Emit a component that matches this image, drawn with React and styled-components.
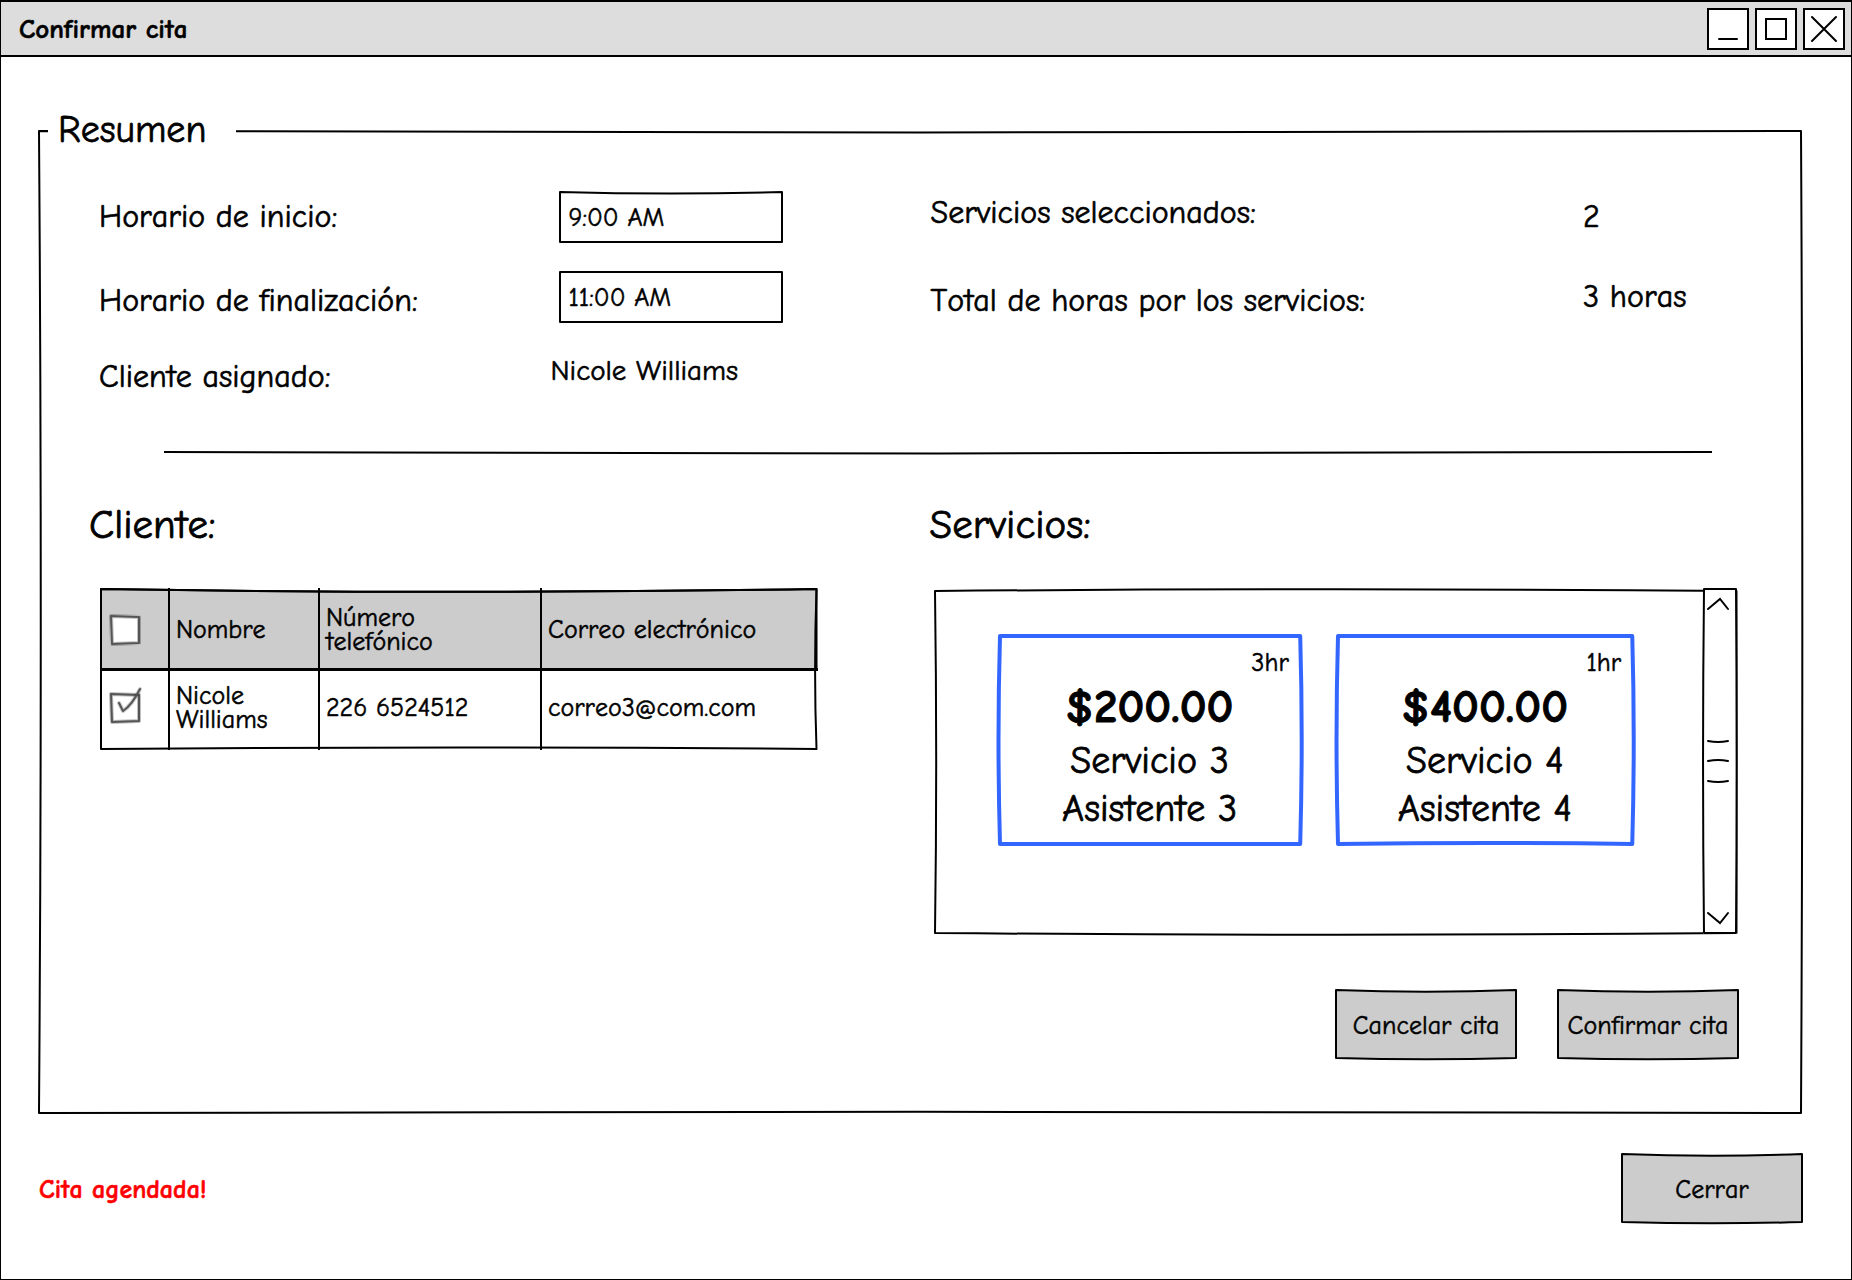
import React, { useState } from "react";
import styled, { createGlobalStyle } from "styled-components";

const INK = "#000";
const FILL = "#ccc";
const BLUE = "#3366ff";
const FONT = `"Comic Sans MS", "Comic Neue", "Open Sans", "Noto Sans", sans-serif`;

const GlobalStyle = createGlobalStyle`
  *, *::before, *::after {
    box-sizing: border-box;
    font-kerning: none;
    -webkit-text-stroke: 0.02em currentColor;
  }
  body {
    margin: 0;
    background: #fff;
    color: ${INK};
    font-family: ${FONT};
  }
  button, input { font: inherit; color: inherit; }
  h2, p { margin: 0; font-weight: 400; }
`;

/* ---------- hand-drawn outline ---------- */

const FrameSvg = styled.svg`
  position: absolute;
  left: ${(p) => p.$weight / 2}px;
  top: ${(p) => p.$top + p.$weight / 2}px;
  width: calc(100% - ${(p) => p.$weight}px);
  height: ${(p) => (p.$height ? `${p.$height}px` : `calc(100% - ${p.$top + p.$weight}px)`)};
  overflow: visible;
  pointer-events: none;
  z-index: -1;

  path {
    fill: ${(p) => p.$fill};
    stroke: ${(p) => p.$stroke};
    stroke-width: ${(p) => p.$weight}px;
    stroke-linejoin: round;
    vector-effect: non-scaling-stroke;
  }
`;

/* bend = how far each side's control point leaves the straight line, in percent */
function Frame({ bend = [0, 0, 0, 0], fill = "none", stroke = INK, weight = 2, top = 0, height }) {
  const [t, r, b, l] = bend;
  return (
    <FrameSvg
      $fill={fill}
      $stroke={stroke}
      $weight={weight}
      $top={top}
      $height={height}
      viewBox="0 0 100 100"
      preserveAspectRatio="none"
      aria-hidden="true"
    >
      <path d={`M0 0 Q50 ${t} 100 0 Q${100 + r} 50 100 100 Q50 ${100 + b} 0 100 Q${l} 50 0 0 Z`} />
    </FrameSvg>
  );
}

/* ---------- window ---------- */

const Window = styled.div`
  display: flex;
  flex-direction: column;
  min-height: 100vh;
  border: 1px solid ${INK};
  border-top: 0;
`;

const TitleBar = styled.header`
  display: flex;
  align-items: center;
  justify-content: space-between;
  height: 57px;
  padding: 0 6px 0 18px;
  background: #ddd;
  border-top: 2px solid ${INK};
  border-bottom: 2px solid ${INK};
`;

const Title = styled.h1`
  margin: 0;
  padding-top: 2px;
  font-size: 27px;
  line-height: 32px;
  font-weight: 700;
`;

const WindowControls = styled.div`
  display: flex;
  gap: 6px;
`;

const ControlButton = styled.button`
  display: grid;
  place-items: center;
  width: 42px;
  height: 42px;
  padding: 0;
  background: #fff;
  border: 2px solid ${INK};

  svg {
    width: 38px;
    height: 38px;
    fill: none;
    stroke: ${INK};
    stroke-width: 2;
    stroke-linecap: round;
  }
`;

const Main = styled.main`
  flex: 1;
  display: flex;
  flex-direction: column;
  gap: 39px;
  padding: 49px 48px 56px 37px;
`;

/* ---------- summary group ---------- */

const Group = styled.fieldset`
  position: relative;
  z-index: 0;
  min-width: 0;
  margin: 0 1px 0 0;
  padding: 37px 63px 55px 51px;
  border: 0;
`;

const Legend = styled.legend`
  margin-left: -41px;
  padding: 0 30px 0 10px;
  background: #fff;
  font-size: 38px;
  line-height: 48px;
`;

const TwoColumns = styled.div`
  display: grid;
  grid-template-columns: minmax(0, 9fr) minmax(0, 10fr);
  column-gap: 112px;
`;

const Details = styled.div`
  display: grid;
  grid-template-columns: minmax(0, 1fr) ${(p) => p.$valueWidth}px;
  grid-template-rows: 52px 52px 48px;
  row-gap: 28px;
  padding-left: ${(p) => p.$inset}px;
  font-size: 32px;
`;

const DetailLabel = styled.label`
  align-self: ${(p) => p.$align};
  line-height: 44px;
  white-space: nowrap;
`;

const DetailValue = styled.output`
  align-self: ${(p) => p.$align};
  font-size: ${(p) => p.$size}px;
  line-height: 40px;
  white-space: nowrap;
`;

const InputBox = styled.div`
  position: relative;
  z-index: 0;
  width: 224px;
  height: 52px;
  margin-left: 8px;
`;

const TimeInput = styled.input`
  width: 100%;
  height: 100%;
  padding: 2px 10px 0;
  background: transparent;
  border: 0;
  outline: 0;
  font-size: 26px;
`;

const Rule = styled.div`
  margin: 53px 27px 45px 75px;

  svg {
    display: block;
    width: 100%;
    height: 4px;
    overflow: visible;
  }

  path {
    fill: none;
    stroke: ${INK};
    stroke-width: 2px;
    vector-effect: non-scaling-stroke;
  }
`;

const Heading = styled.h2`
  margin-bottom: 39px;
  font-size: 41px;
  line-height: 48px;
`;

/* ---------- client table ---------- */

const TableWrap = styled.div`
  position: relative;
  z-index: 0;
  margin-left: 11px;
`;

const Table = styled.table`
  width: 100%;
  table-layout: fixed;
  border-collapse: collapse;
  font-size: 26px;
  line-height: 24px;
  text-align: left;
`;

const HeadRow = styled.tr`
  height: 81px;
  border-bottom: 3px solid ${INK};
`;

const BodyRow = styled.tr`
  height: 81px;
`;

const HeadCell = styled.th`
  padding: 4px 24px 0 6px;
  font-weight: 400;
  vertical-align: middle;

  & + & {
    border-left: 2px solid ${INK};
  }
`;

const Cell = styled.td`
  padding: 0 6px 4px;
  vertical-align: middle;

  & + & {
    border-left: 2px solid ${INK};
  }
`;

const Col = styled.col`
  width: ${(p) => (p.$width ? `${p.$width}px` : "auto")};
`;

const CheckBox = styled.label`
  position: relative;
  display: block;
  width: 30px;
  height: 30px;
  margin-left: 4px;

  input {
    appearance: none;
    display: block;
    width: 30px;
    height: 30px;
    margin: 0;
    background: #fff;
  }

  svg {
    position: absolute;
    inset: 0;
    overflow: visible;
    pointer-events: none;
    fill: none;
    stroke-linejoin: round;
    stroke-linecap: round;
  }
`;

function SketchCheck({ label, checked, onChange }) {
  const box = "M1 1 L29 2 L29 28 L2 29 Z";
  const tick = "M9 10 L13 18 Q22 12 30 -4";
  return (
    <CheckBox>
      <input type="checkbox" aria-label={label} checked={checked} onChange={onChange} />
      <svg width="30" height="30" viewBox="0 0 30 30" aria-hidden="true">
        <path d={box} stroke="#000" strokeOpacity="0.25" strokeWidth="4" />
        <path d={box} stroke="#555" strokeWidth="2" />
        {checked && (
          <>
            <path d={tick} stroke="#000" strokeOpacity="0.2" strokeWidth="4" />
            <path d={tick} stroke="#555" strokeWidth="2" />
          </>
        )}
      </svg>
    </CheckBox>
  );
}

/* ---------- services ---------- */

const ServicePanel = styled.div`
  position: relative;
  z-index: 0;
  display: grid;
  grid-template-columns: minmax(0, 1fr) 34px;
  height: 346px;
  margin: 0 2px 0 4px;
`;

const Cards = styled.div`
  display: grid;
  grid-template-columns: 51fr 50fr;
  gap: 34px;
  align-content: start;
  padding: 46px 69px 0 64px;
`;

const Card = styled.article`
  position: relative;
  z-index: 0;
  height: 212px;
  padding-top: 13px;
  text-align: center;
`;

const Hours = styled.p`
  padding-right: 13px;
  font-size: 26px;
  line-height: 32px;
  text-align: right;
`;

const Price = styled.strong`
  display: block;
  margin: 2px 0 4px;
  font-weight: 700;
  font-size: 47px;
  line-height: 52px;
`;

const CardLine = styled.p`
  font-size: 38px;
  line-height: 48px;
`;

const ScrollBar = styled.div`
  position: relative;
  z-index: 0;
  display: flex;
  flex-direction: column;
  align-items: center;
  justify-content: space-between;
  padding: 6px 5px;
  background: #fff;

  svg {
    display: block;
    overflow: visible;
    fill: none;
    stroke: ${INK};
    stroke-width: 2;
    stroke-linecap: round;
  }
`;

const ArrowButton = styled.button`
  width: 24px;
  height: 20px;
  padding: 0;
  background: none;
  border: 0;
`;

/* ---------- actions ---------- */

const Actions = styled.div`
  display: flex;
  justify-content: flex-end;
  gap: 40px;
  margin-top: 55px;
`;

const ActionButton = styled.button`
  position: relative;
  z-index: 0;
  width: 182px;
  height: 70px;
  padding: 3px 0 0;
  background: none;
  border: 0;
  font-size: 26px;
  line-height: 32px;
  white-space: nowrap;
`;

function SketchButton({ children }) {
  return (
    <ActionButton type="button">
      <Frame bend={[5, 0, 4, 0]} fill={FILL} />
      {children}
    </ActionButton>
  );
}

const Footer = styled.footer`
  display: flex;
  align-items: center;
  justify-content: space-between;
`;

const Status = styled.strong`
  padding: 3px 0 0 1px;
  color: #f00;
  font-weight: 700;
  font-size: 26px;
  line-height: 32px;
`;

const SERVICES = [
  { hours: "3hr", price: "$200.00", name: "Servicio 3", assistant: "Asistente 3", bend: [0, 1, 0, -1] },
  { hours: "1hr", price: "$400.00", name: "Servicio 4", assistant: "Asistente 4", bend: [0, 1, -1, -1] },
];

const CLIENTS = [{ name: "Nicole Williams", phone: "226 6524512", mail: "correo3@com.com" }];

export default function App() {
  const [all, setAll] = useState(false);
  const [picked, setPicked] = useState([true]);
  const [start, setStart] = useState("9:00 AM");
  const [end, setEnd] = useState("11:00 AM");

  return (
    <>
      <GlobalStyle />
      <Window>
        <TitleBar>
          <Title>Confirmar cita</Title>
          <WindowControls>
            <ControlButton type="button" aria-label="Minimizar">
              <svg viewBox="0 0 38 38"><path d="M10 29H28" /></svg>
            </ControlButton>
            <ControlButton type="button" aria-label="Maximizar">
              <svg viewBox="0 0 38 38"><rect x="9" y="9" width="20" height="20" /></svg>
            </ControlButton>
            <ControlButton type="button" aria-label="Cerrar ventana">
              <svg viewBox="0 0 38 38"><path d="M7 7L31 31M31 7L7 31" /></svg>
            </ControlButton>
          </WindowControls>
        </TitleBar>

        <Main>
          <Group>
            <Legend>Resumen</Legend>
            <Frame top={-24} bend={[0.3, 0.15, -0.25, 0.2]} />

            <TwoColumns>
              <Details $valueWidth={267} $inset={10}>
                <DetailLabel htmlFor="start" $align="center">Horario de inicio:</DetailLabel>
                <InputBox>
                  <Frame bend={[6, 0, 0, 0]} />
                  <TimeInput id="start" value={start} onChange={(e) => setStart(e.target.value)} />
                </InputBox>
                <DetailLabel htmlFor="end" $align="end">Horario de finalización:</DetailLabel>
                <InputBox>
                  <Frame />
                  <TimeInput id="end" value={end} onChange={(e) => setEnd(e.target.value)} />
                </InputBox>
                <DetailLabel htmlFor="client" $align="end">Cliente asignado:</DetailLabel>
                <DetailValue id="client" $align="start" $size={29}>Nicole Williams</DetailValue>
              </Details>

              <Details $valueWidth={156} $inset={1}>
                <DetailLabel htmlFor="count" $align="start">Servicios seleccionados:</DetailLabel>
                <DetailValue id="count" $align="center" $size={32}>2</DetailValue>
                <DetailLabel htmlFor="total" $align="end">Total de horas por los servicios:</DetailLabel>
                <DetailValue id="total" $align="center" $size={32}>3 horas</DetailValue>
              </Details>
            </TwoColumns>

            <Rule role="separator">
              <svg viewBox="0 0 100 4" preserveAspectRatio="none" aria-hidden="true">
                <path d="M0 0 Q50 3 100 0" />
              </svg>
            </Rule>

            <TwoColumns>
              <section>
                <Heading>Cliente:</Heading>
                <TableWrap>
                  <Frame height={80} bend={[7, 0, 0, 0]} fill={FILL} />
                  <Frame bend={[3.5, -0.4, -2, 0]} />
                  <Table>
                    <colgroup>
                      <Col $width={69} />
                      <Col $width={150} />
                      <Col $width={222} />
                      <Col />
                    </colgroup>
                    <thead>
                      <HeadRow>
                        <HeadCell>
                          <SketchCheck
                            label="Seleccionar todos"
                            checked={all}
                            onChange={() => setAll(!all)}
                          />
                        </HeadCell>
                        <HeadCell>Nombre</HeadCell>
                        <HeadCell>Número telefónico</HeadCell>
                        <HeadCell>Correo electrónico</HeadCell>
                      </HeadRow>
                    </thead>
                    <tbody>
                      {CLIENTS.map((c, i) => (
                        <BodyRow key={c.mail}>
                          <Cell>
                            <SketchCheck
                              label={c.name}
                              checked={picked[i]}
                              onChange={() => setPicked(picked.map((v, j) => (j === i ? !v : v)))}
                            />
                          </Cell>
                          <Cell>{c.name}</Cell>
                          <Cell>{c.phone}</Cell>
                          <Cell>{c.mail}</Cell>
                        </BodyRow>
                      ))}
                    </tbody>
                  </Table>
                </TableWrap>
              </section>

              <section>
                <Heading>Servicios:</Heading>
                <ServicePanel>
                  <Frame top={2} bend={[-1, 0, 1, 0.3]} />
                  <Cards>
                    {SERVICES.map((s) => (
                      <Card key={s.name}>
                        <Frame bend={s.bend} stroke={BLUE} weight={4} />
                        <Hours>{s.hours}</Hours>
                        <Price>{s.price}</Price>
                        <CardLine>{s.name}</CardLine>
                        <CardLine>{s.assistant}</CardLine>
                      </Card>
                    ))}
                  </Cards>
                  <ScrollBar>
                    <Frame bend={[0, 4, 0, -6]} />
                    <ArrowButton type="button" aria-label="Subir">
                      <svg width="24" height="20" viewBox="0 0 24 20"><path d="M0 15L12 5L20 15" /></svg>
                    </ArrowButton>
                    <svg width="24" height="44" viewBox="0 0 24 44" aria-hidden="true">
                      <path d="M0 2Q10 4 20 2M0 22Q10 20 20 22M0 42Q10 44 20 42" />
                    </svg>
                    <ArrowButton type="button" aria-label="Bajar">
                      <svg width="24" height="20" viewBox="0 0 24 20"><path d="M0 5L12 15L20 5" /></svg>
                    </ArrowButton>
                  </ScrollBar>
                </ServicePanel>
                <Actions>
                  <SketchButton>Cancelar cita</SketchButton>
                  <SketchButton>Confirmar cita</SketchButton>
                </Actions>
              </section>
            </TwoColumns>
          </Group>

          <Footer>
            <Status role="status">Cita agendada!</Status>
            <SketchButton>Cerrar</SketchButton>
          </Footer>
        </Main>
      </Window>
    </>
  );
}
